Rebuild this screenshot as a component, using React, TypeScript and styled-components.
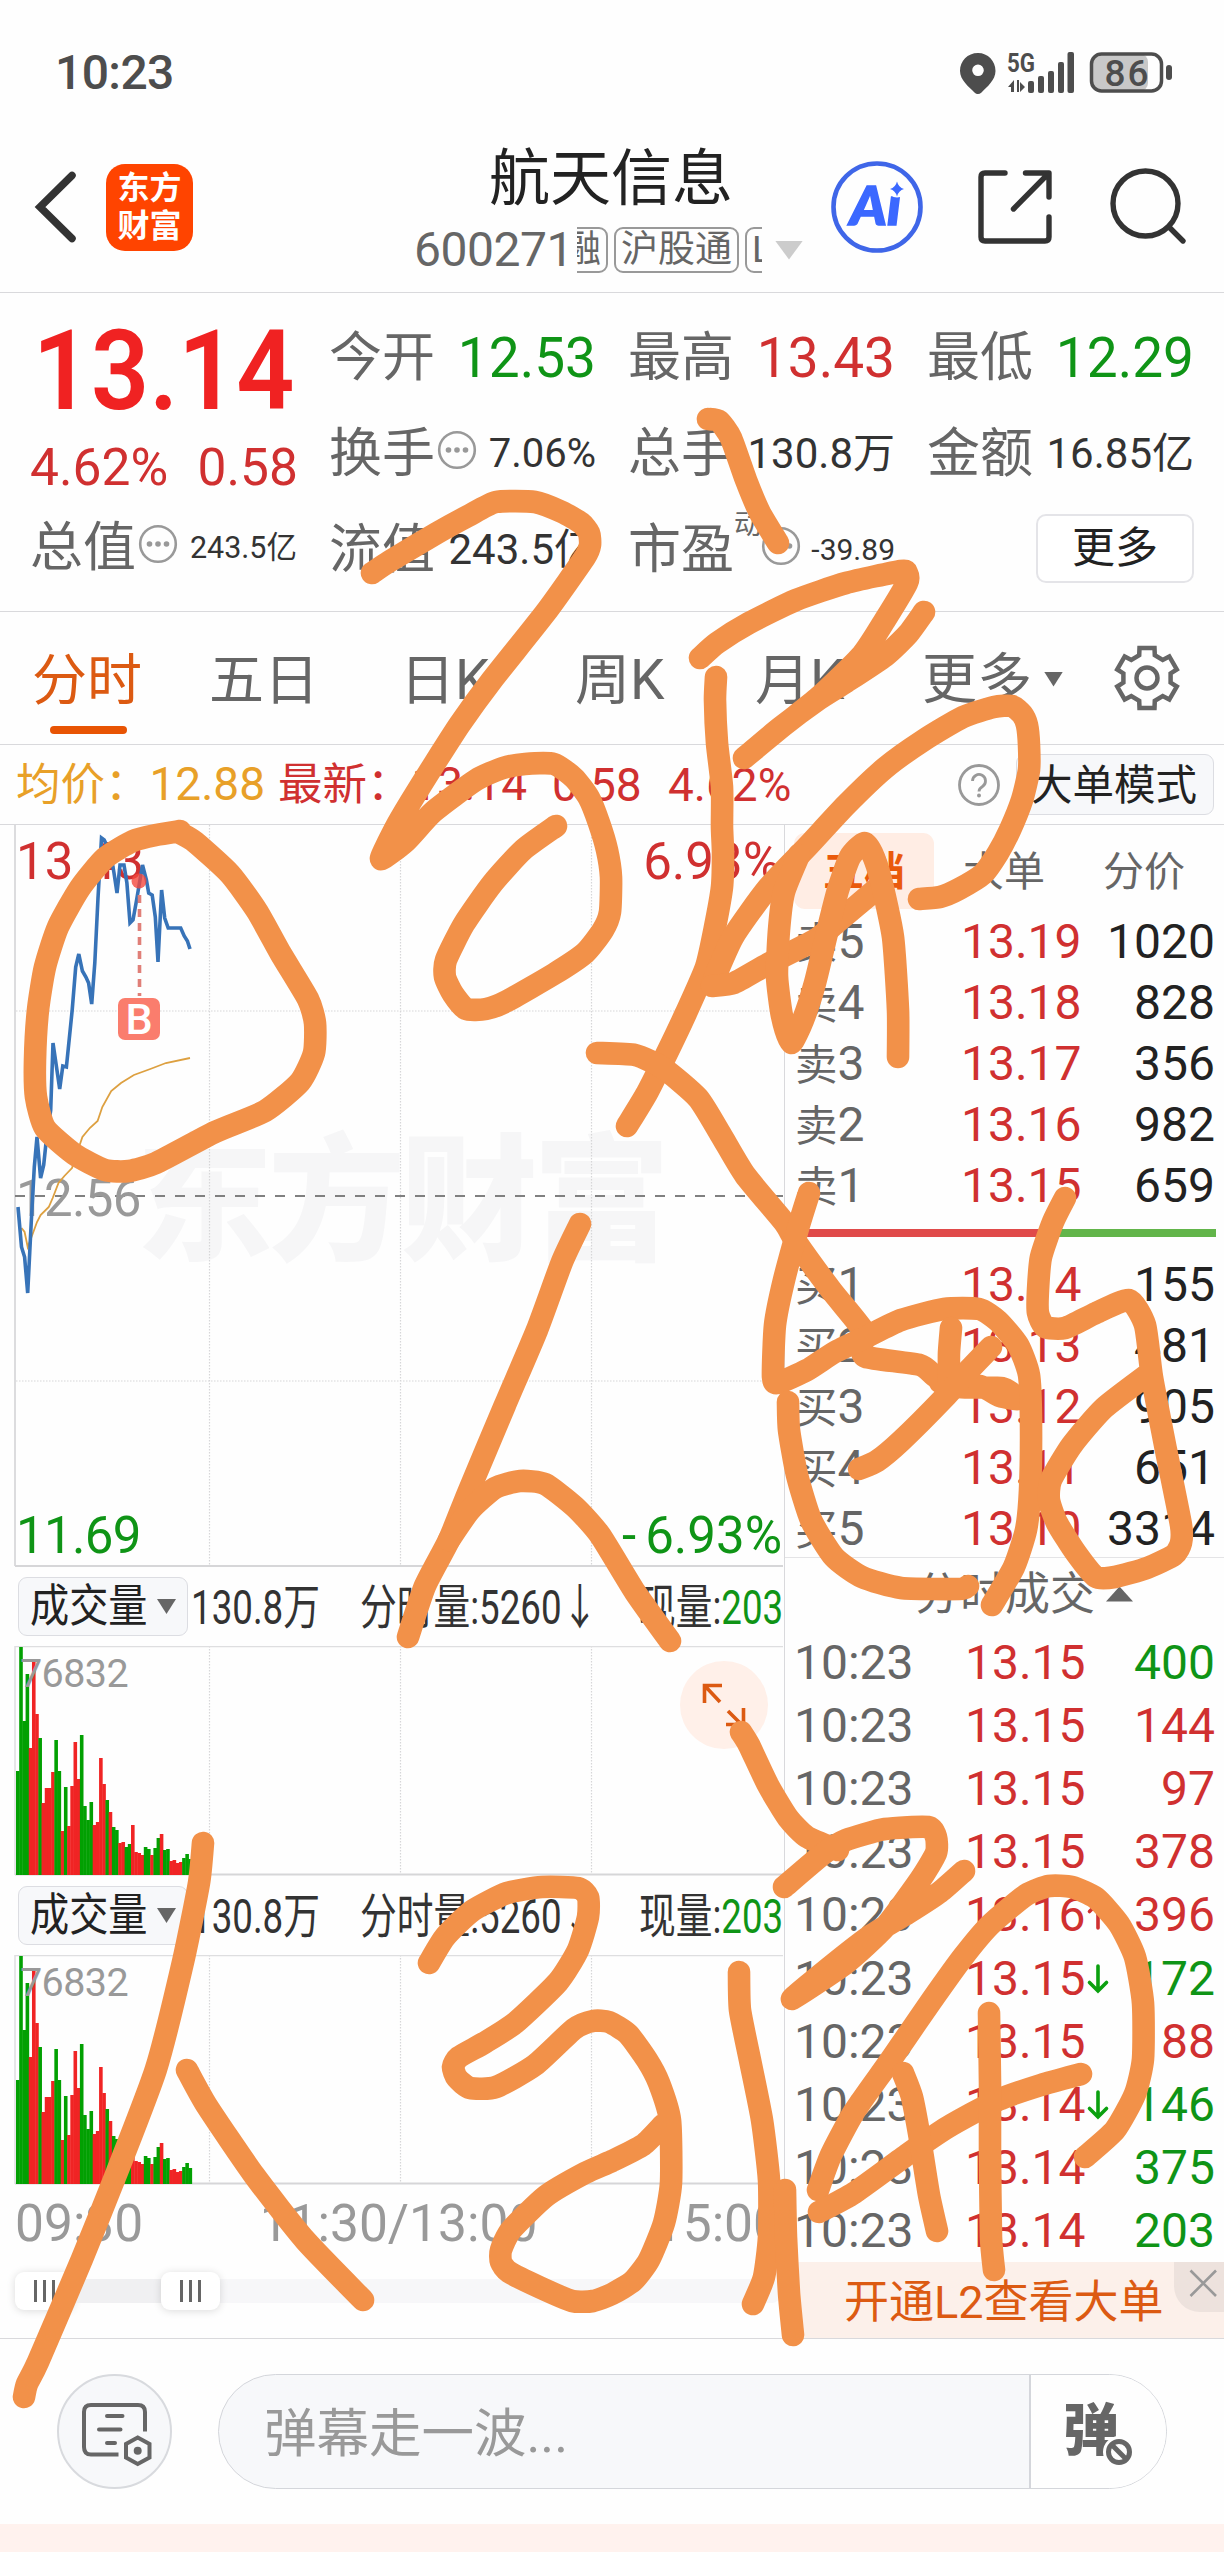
import React from 'react';
import styled, { createGlobalStyle } from 'styled-components';

const RED = '#d03030';
const GREEN = '#0f9416';
const GREY = '#666666';
const LINE = '#d9d9dc';
const ACCENT = '#dc5a12';
const FONT = 'Roboto, "Noto Sans CJK SC", sans-serif';

const GlobalStyle = createGlobalStyle`
  * { box-sizing: border-box; }
  body { margin: 0; background: #fefefe; font-family: ${FONT}; }
`;

/* ---------- page frame ---------- */

const Page = styled.div`
  position: relative;
  width: 1224px;
  height: 2552px;
  overflow: hidden;
  display: flex;
  flex-direction: column;
  background: #fefefe;
  color: #333;
  font-family: ${FONT};
  line-height: 1;
  white-space: nowrap;
`;

/* ---------- status bar ---------- */

const StatusBar = styled.div`
  height: 130px;
  padding: 51px 51px 0 55px;
  display: flex;
  justify-content: space-between;
  align-items: flex-start;
`;

const Clock = styled.div`
  font-size: 48px;
  line-height: 43px;
  font-weight: 500;
  letter-spacing: -0.6px;
  color: #4d4d4d;
`;

const StatusGlyphs = styled.svg`
  width: 214px;
  height: 44px;
  overflow: visible;
`;

/* ---------- header ---------- */

const Header = styled.header`
  height: 163px;
  border-bottom: 1px solid ${LINE};
  display: flex;
  padding-left: 30px;
`;

const BackIcon = styled.svg`
  margin-top: 40px;
  width: 50px;
  height: 74px;
`;

const AppLogo = styled.div`
  margin: 34px 0 0 26px;
  width: 87px;
  height: 87px;
  border-radius: 19px;
  background: #ff4400;
  color: #fff;
  font-size: 32px;
  font-weight: 700;
  line-height: 38px;
  padding-top: 5px;
  text-align: center;
`;

const TitleBlock = styled.div`
  margin-left: 221px;
  width: 400px;
  display: flex;
  flex-direction: column;
`;

const StockName = styled.h1`
  margin: 18px 0 0 75px;
  font-size: 61px;
  line-height: 62px;
  font-weight: 400;
  color: #222;
`;

const CodeRow = styled.div`
  margin-top: 16px;
  height: 48px;
  display: flex;
  align-items: center;
`;

const Code = styled.span`
  font-size: 48px;
  letter-spacing: -0.5px;
  width: 163px;
  color: ${GREY};
`;

const Tags = styled.div`
  width: 185px;
  height: 46px;
  margin-right: 13px;
  overflow: hidden;
  display: flex;
  gap: 6px;
`;

const Tag = styled.span<{ $shift?: number }>`
  flex: none;
  height: 46px;
  padding: 0 5px;
  margin-left: ${(p) => p.$shift ?? 0}px;
  border: 2px solid #999;
  border-radius: 9px;
  font-size: 37px;
  line-height: 41px;
  color: ${GREY};
`;

const Caret = styled.i<{ $w: number; $h: number; $color: string; $up?: boolean }>`
  flex: none;
  width: ${(p) => p.$w}px;
  height: ${(p) => p.$h}px;
  background: ${(p) => p.$color};
  clip-path: ${(p) => (p.$up ? 'polygon(50% 0, 100% 100%, 0 100%)' : 'polygon(0 0, 100% 0, 50% 100%)')};
`;

const HeaderIcons = styled.svg`
  margin: 28px 0 0 10px;
  width: 370px;
  height: 100px;
`;

/* ---------- quote summary ---------- */

const Quote = styled.section`
  height: 319px;
  border-bottom: 1px solid ${LINE};
  padding: 17px 0 0 30px;
  display: grid;
  grid-template-columns: repeat(4, 268px);
  column-gap: 31px;
`;

const QuoteColumn = styled.div`
  display: flex;
  flex-direction: column;
`;

const Price = styled.div`
  height: 121px;
  line-height: 121px;
  font-size: 112px;
  font-weight: 600;
  padding-left: 3px;
  transform: scaleX(0.91);
  transform-origin: left center;
  color: #f02222;
`;

const Change = styled.div`
  height: 74px;
  display: flex;
  align-items: center;
  justify-content: space-between;
  font-size: 51.5px;
  color: ${RED};
`;

const Metric = styled.div<{ $h?: number }>`
  height: ${(p) => p.$h ?? 96}px;
  display: flex;
  align-items: center;
`;

const MetricLabel = styled.span`
  font-size: 53px;
  color: ${GREY};
`;

const MetricValue = styled.span<{ $size: number; $color?: string }>`
  margin-left: auto;
  padding-right: 1px;
  font-size: ${(p) => p.$size}px;
  color: ${(p) => p.$color ?? '#333'};
`;

const Superscript = styled.sup`
  align-self: flex-start;
  margin-top: 9px;
  font-size: 28px;
  line-height: 28px;
  color: ${GREY};
`;

const InfoDots = styled.svg<{ $gap?: number }>`
  width: 40px;
  height: 40px;
  margin: -8px 0 0 ${(p) => p.$gap ?? 2}px;
`;

const MoreButton = styled.button`
  margin: -4px 1px 0 auto;
  width: 158px;
  height: 69px;
  border: 2px solid #e4e4e8;
  border-radius: 10px;
  background: #fff;
  font: 400 43px/1 ${FONT};
  color: #222;
`;

/* ---------- period tabs ---------- */

const PeriodTabs = styled.nav`
  height: 133px;
  border-bottom: 1px solid ${LINE};
  padding-left: 32px;
  display: flex;
  align-items: center;
`;

const PeriodTab = styled.a<{ $w: number; $active?: boolean }>`
  width: ${(p) => p.$w}px;
  height: 132px;
  display: flex;
  flex-direction: column;
  font-size: 55px;
  line-height: 55px;
  padding-top: 41px;
  color: ${(p) => (p.$active ? ACCENT : GREY)};
  &::after {
    content: '';
    display: ${(p) => (p.$active ? 'block' : 'none')};
    width: 77px;
    height: 8px;
    border-radius: 4px;
    margin: 18px 0 0 18px;
    background: #e85404;
  }
`;

const MoreTab = styled.a`
  display: flex;
  align-items: center;
  gap: 12px;
  width: 190px;
  padding-top: 2px;
  font-size: 55px;
  color: ${GREY};
`;

/* ---------- average / latest strip ---------- */

const PriceStrip = styled.div`
  height: 80px;
  border-bottom: 1px solid ${LINE};
  padding-left: 16px;
  display: flex;
  align-items: center;
  font-size: 46px;
`;

const StripItem = styled.span<{ $w: number; $color: string }>`
  width: ${(p) => p.$w}px;
  color: ${(p) => p.$color};
`;

const StripLabel = styled.span`
  font-size: 44.5px;
`;

const HelpIcon = styled.svg`
  width: 44px;
  height: 44px;
  margin-left: auto;
`;

const ModeButton = styled.button`
  margin: 0 10px 0 15px;
  width: 198px;
  height: 61px;
  border: 1px solid #dcdde2;
  border-radius: 9px;
  background: #f7f8fa;
  padding: 2px 2px 0 0;
  font: 400 41.5px/1 ${FONT};
  color: #222;
`;

/* ---------- main area ---------- */

const Main = styled.main`
  height: 1514px;
  border-bottom: 1px solid ${LINE};
  display: flex;
`;

const ChartColumn = styled.div`
  width: 785px;
  border-right: 1px solid ${LINE};
  display: flex;
  flex-direction: column;
`;

const ChartSvg = styled.svg`
  display: block;
  flex: none;
`;

const VolumeHead = styled.div`
  height: 79px;
  padding-left: 18px;
  display: flex;
  align-items: center;
`;

const IndicatorSelect = styled.div`
  width: 170px;
  height: 59px;
  border: 1px solid #dcdde2;
  border-radius: 9px;
  background: #f7f8fa;
  padding: 0 11px 0 11px;
  display: flex;
  align-items: center;
  justify-content: space-between;
`;

const IndicatorName = styled.span`
  width: 118px;
  font-size: 45px;
  transform: scaleX(0.87);
  transform-origin: left center;
  color: #222;
`;

const Narrow = styled.span<{ $w: number; $gap: number }>`
  width: ${(p) => p.$w}px;
  margin-left: ${(p) => p.$gap}px;
  padding-top: 2px;
  font-size: 48px;
  transform: scaleX(0.765);
  transform-origin: left center;
`;

const Down = styled.span`
  color: ${GREEN};
`;

const VolumeBox = styled.div`
  position: relative;
  height: 230px;
`;

const ExpandButton = styled.svg`
  position: absolute;
  left: 680px;
  top: 15px;
  width: 88px;
  height: 88px;
`;

const TimeAxis = styled.div`
  height: 76px;
  padding: 2px 2px 0 15px;
  display: flex;
  align-items: center;
  justify-content: space-between;
  font-size: 51.5px;
  color: #999;
`;

const RangeTrack = styled.div`
  margin: 18px 4px 0 15px;
  height: 24px;
  border-radius: 8px;
  background: #f7f7f9;
  display: flex;
  align-items: center;
`;

const RangeFill = styled.div`
  width: 87px;
  height: 24px;
  background: #f0f0f2;
`;

const RangeHandle = styled.div`
  width: 59px;
  height: 38px;
  border-radius: 9px;
  background: #fff;
  box-shadow: 0 1px 8px rgba(0, 0, 0, 0.14);
  display: flex;
  align-items: center;
  justify-content: center;
  gap: 6px;
`;

const Grip = styled.i`
  width: 3px;
  height: 22px;
  background: ${GREY};
`;

/* ---------- order book ---------- */

const BookColumn = styled.aside`
  width: 439px;
  display: flex;
  flex-direction: column;
`;

const BookTabs = styled.div`
  height: 85px;
  padding: 8px 0 0 9px;
  display: flex;
`;

const BookTab = styled.a<{ $active?: boolean }>`
  width: 140px;
  height: 76px;
  border-radius: 11px;
  background: ${(p) => (p.$active ? '#ffede4' : 'transparent')};
  color: ${(p) => (p.$active ? '#ea5a0c' : GREY)};
  font-size: 41px;
  font-weight: ${(p) => (p.$active ? 700 : 400)};
  line-height: 78px;
  text-align: center;
`;

const LevelRow = styled.div`
  height: 61px;
  padding: 2px 9px 0 10px;
  display: flex;
  align-items: center;
  font-size: 48px;
`;

const Level = styled.span`
  width: 166px;
  color: ${GREY};
`;

const Side = styled.span`
  font-size: 42.5px;
`;

const LevelPrice = styled.span`
  width: 130px;
  color: ${RED};
`;

const LevelQty = styled.span`
  margin-left: auto;
  color: #222;
`;

const Balance = styled.div`
  margin: 14px 8px 16px 9px;
  height: 8px;
  display: flex;
`;

const BalanceSide = styled.i<{ $grow: number; $color: string }>`
  flex: ${(p) => p.$grow};
  background: ${(p) => p.$color};
`;

const TradesHead = styled.div`
  height: 73px;
  margin-top: -1px;
  border-top: 1px solid #e4e4e6;
  padding-left: 130px;
  display: flex;
  align-items: center;
  gap: 11px;
  font-size: 45px;
  color: ${GREY};
`;

const TradeRow = styled.div`
  height: 63.2px;
  padding: 2px 9px 0 9px;
  display: flex;
  align-items: center;
  font-size: 48px;
`;

const TradeTime = styled.span`
  width: 171px;
  color: ${GREY};
`;

const TradePrice = styled.span`
  width: 121px;
  color: ${RED};
`;

const TradeQty = styled.span<{ $color: string }>`
  margin-left: auto;
  color: ${(p) => p.$color};
`;

const Tick = styled.svg`
  width: 24px;
  height: 32px;
`;

const Promo = styled.div`
  height: 76px;
  background: #fcf0ea;
  padding-left: 59px;
  display: flex;
  align-items: center;
  justify-content: space-between;
  font-size: 45px;
  color: ${ACCENT};
`;

const PromoText = styled.span`
  padding-top: 5px;
`;

const PromoClose = styled.svg`
  align-self: flex-start;
  width: 50px;
  height: 50px;
  border-bottom-left-radius: 26px;
  background: #ede2dd;
`;

/* ---------- comment bar ---------- */

const CommentBar = styled.footer`
  height: 185px;
  padding: 35px 0 0 57px;
  display: flex;
  align-items: flex-start;
`;

const RoundButton = styled.svg`
  width: 115px;
  height: 115px;
`;

const CommentBox = styled.div`
  margin-left: 46px;
  width: 949px;
  height: 115px;
  border: 1px solid #d4d6db;
  border-radius: 58px;
  overflow: hidden;
  display: flex;
  background: #f7f8fa;
`;

const Placeholder = styled.span`
  flex: 1;
  padding-left: 45px;
  font-size: 52.5px;
  line-height: 119px;
  color: #999;
`;

const BarrageToggle = styled.div`
  position: relative;
  width: 137px;
  border-left: 2px solid #d4d6db;
  background: #fefefe;
  padding: 27px 0 0 32px;
  font-size: 56px;
  line-height: 58px;
  font-weight: 900;
  color: ${GREY};
`;

const BlockBadge = styled.svg`
  position: absolute;
  left: 72px;
  top: 61px;
  width: 32px;
  height: 32px;
`;

const BottomStrip = styled.div`
  flex: 1;
  background: #fff2ee;
`;

const InkLayer = styled.svg`
  position: absolute;
  left: 0;
  top: 0;
  pointer-events: none;
`;

/* ---------- data ---------- */

const sells: [string, string, string][] = [
  ['5', '13.19', '1020'],
  ['4', '13.18', '828'],
  ['3', '13.17', '356'],
  ['2', '13.16', '982'],
  ['1', '13.15', '659'],
];

const buys: [string, string, string][] = [
  ['1', '13.14', '155'],
  ['2', '13.13', '481'],
  ['3', '13.12', '905'],
  ['4', '13.11', '651'],
  ['5', '13.10', '3314'],
];

type Trade = { price: string; qty: string; up?: boolean; tick?: 'up' | 'down' };

const trades: Trade[] = [
  { price: '13.15', qty: '400' },
  { price: '13.15', qty: '144', up: true },
  { price: '13.15', qty: '97', up: true },
  { price: '13.15', qty: '378', up: true },
  { price: '13.16', qty: '396', up: true, tick: 'up' },
  { price: '13.15', qty: '172', tick: 'down' },
  { price: '13.15', qty: '88', up: true },
  { price: '13.14', qty: '146', tick: 'down' },
  { price: '13.14', qty: '375' },
  { price: '13.14', qty: '203' },
];

const priceLine =
  '18,1207 21.5,1247 24.6,1257 27.7,1293 31.2,1223 34.3,1167 37,1137 40.6,1178 43.7,1165 46,1143 50.7,1110 53,1043 59.7,1089 62.8,1066 66.4,1067 72.2,1010 75.7,967 78.8,954 82.4,971 85.9,977 88.6,983 91.7,1004 94.8,963 98,898 101.5,838 104.2,840 107,846 110.5,853 114,873 117,893 120,865 124,865 126.9,883 130,923 133,920 136.6,900 142.5,865 146.4,880 148.7,893 152.2,895 155.3,917 158,962 161.6,890 164.7,918 168.2,928 180.7,928 184.2,936 187.4,941 190,949';

const averageLine =
  '21.5,1228 24.6,1232 27.7,1247 33,1233 37,1222 40.6,1215 48.8,1207 52.7,1198 58.5,1183 64.4,1176 72,1168 79,1147 82.4,1137 89.8,1128 97.6,1121 102.3,1107 111.2,1091 121,1083 133.9,1075 150.3,1069 165.9,1063 190,1058';

// Bar height and direction per minute since the open.
const volumes =
  '104g 228g 154g 201g 127r 214r 161r 137g 72r 87r 87r 103r 135g 104g 44r 88g 49r 89r 133r 96r 140g 69g 55g 73g 50r 53r 117r 91r 75g 63r 48g 45g 32r 33r 28g 31g 50r 23r 22r 20r 28g 26g 20r 27g 37g 41r 25g 26g 14r 15r 12r 13r 17g 21g 16g'
    .split(' ')
    .map((v) => ({ h: parseInt(v, 10), up: v.endsWith('r') }));

// Handwritten pen strokes, one list of points each.
const strokes = [
  '372,573 390,561 437,533 468,516 496,502 535,502 562,512 581,523 589,533 590,545 585,557 546,612 492,680 460,724 433,766 410,803 396,827 381,859 406,841 433,812 476,780 503,768 525,764 554,764 574,778 589,798 599,823 607,850 611,877 610,912 603,930 585,953 554,974 507,1001 486,1009 466,1009 453,994 445,977 446,960 464,924 492,884 523,850 556,826',
  '708,419 719,421 731,438 746,480 760,513 778,543',
  '700,658 717,643 749,623 796,600 846,583 901,571 907,573 907,583 885,620 862,655 819,697 784,725 744,758 780,728 819,699 846,682 885,656 908,634 924,612',
  '716,677 715,700 717,743 722,787 722,827 723,853 722,887 715,927 706,967 686,1013 667,1053 647,1093 627,1126',
  '712,984 733,937 768,888 807,847 846,805 885,768 924,740 963,717 994,707 1012,706 1022,714 1027,725 1029,745 1029,770 1022,800 1010,830 998,853 983,874 959,889 940,897 919,899',
  '712,986 734,983 768,964 815,940 835,924 854,908 881,885',
  '799,855 784,892 779,930 777,976 782,1016 791,1043 803,1020 815,983 827,933 838,890 850,857 864,843 872,853 881,880 893,937 898,1010 898,1057',
  '597,1053 635,1055 663,1068 698,1098 721,1135 745,1175 784,1222 796,1242 831,1290 863,1330 862,1345 866,1357 920,1365 936,1377 960,1387 1002,1388 1018,1399 1000,1396 980,1386 940,1382',
  '809,1193 799,1225 784,1280 775,1325 773,1377 778,1383 807,1370 835,1352 866,1337 901,1320 944,1309 979,1309 998,1321 1018,1345 1029,1375 1031,1423 1030,1490 1026,1530 1014,1567 992,1605',
  '788,1402 789,1430 797,1475 811,1520 834,1557 862,1577 901,1588 959,1589 968,1586',
  '951,1328 949,1353 949,1382',
  '991,1347 968,1371 944,1398 901,1441 877,1461 859,1469',
  '1065,1198 1053,1222 1041,1257 1038,1290 1038,1313 1045,1327 1065,1328 1096,1313 1129,1300 1145,1325 1152,1377 1166,1450 1181,1525 1181,1543 1174,1555 1147,1568 1115,1577 1096,1577 1076,1553 1057,1523 1049,1500 1051,1480 1072,1445 1104,1408 1151,1372',
  '580,1224 562,1262 537,1330 505,1405 468,1493 449,1540 425,1586 408,1637',
  '449,1540 470,1510 495,1488 520,1481 545,1484 575,1507 600,1535 635,1592 670,1641',
  '203,1843 199,1883 183,1962 156,2069 117,2172 82,2259 38,2362 27,2384 24,2397',
  '187,2070 207,2106 254,2175 305,2240 363,2300',
  '429,1963 445,1937 472,1911 507,1893 542,1887 578,1888 588,1897 588,1917 578,1950 558,1982 515,2023 484,2043 459,2057 453,2067 457,2078 470,2088 496,2087 535,2065 574,2029 593,2021 609,2022 628,2034 647,2060 659,2083 670,2120 671,2183 664,2223 649,2260 633,2281 612,2294 593,2301 572,2301 539,2287 509,2272 501,2262 501,2250 511,2230 546,2196 585,2173 612,2161 643,2145 663,2125',
  '741,1732 749,1745 768,1785 788,1818 807,1837 838,1850',
  '784,1887 823,1854 846,1840 885,1829 928,1827 936,1837 936,1853 920,1880 885,1927 846,1963 792,1999 830,1967 870,1936 908,1913 940,1892 964,1871',
  '739,1972 740,2010 750,2060 762,2120 769,2180 769,2237 764,2277 753,2304',
  '785,2190 786,2237 789,2293 793,2335',
  '818,2190 831,2155 854,2112 885,2068 901,2045 932,2000 963,1957 990,1925 1026,1895 1049,1886 1072,1887 1096,1898 1119,1924 1135,1957 1143,2003 1143,2059 1135,2094 1115,2130 1085,2157',
  '819,2212 854,2193 908,2154 948,2127 998,2100 1041,2085 1081,2074',
  '903,2073 912,2097 920,2139 929,2195 937,2231',
  '989,2013 990,2083 990,2150 991,2237 994,2270',
  '180,831 156,835 133,841 105,858 80,888 58,927 45,967 38,1010 35,1060 36,1097 45,1128 74,1154 105,1170 129,1171 156,1163 215,1132 265,1111 300,1082 314,1053 315,1023 308,999 281,954 257,911 230,874 195,842 180,833',
];

const toPath = (points: string) => {
  const pts = points.split(' ').map((p) => p.split(',').map(Number));
  let d = `M${pts[0][0]} ${pts[0][1]}`;
  for (let i = 0; i < pts.length - 1; i++) {
    const a = pts[Math.max(i - 1, 0)];
    const b = pts[i];
    const c = pts[i + 1];
    const e = pts[Math.min(i + 2, pts.length - 1)];
    const k = 0.1;
    d += `C${b[0] + (c[0] - a[0]) * k} ${b[1] + (c[1] - a[1]) * k} ${c[0] - (e[0] - b[0]) * k} ${c[1] - (e[1] - b[1]) * k} ${c[0]} ${c[1]}`;
  }
  return d;
};

/* ---------- pieces ---------- */

const StatusIcons = () => (
  <StatusGlyphs viewBox="960 50 214 44" fill="#4d4d4d">
    <path fillRule="evenodd" d="M979 52c-10.500 0-18 8-18 18 0 9 9 16 14.500 21.500 2.500 2 4.500 2 7 0C988 86 996.500 79 996.500 70c0-10-7.500-18-17.500-18zm0 11.500a5.800 5.800 0 1 1 0 11.600a5.800 5.800 0 0 1 0-11.600z" />
    <text x="1008" y="71" fontSize="25.500" fontWeight="700" textLength="28" lengthAdjust="spacingAndGlyphs">5G</text>
    <path d="M1009 86l6-7v12h-3v-5zM1017 79v12M1018 79v12h2V79zM1021 81l5 5l-5 5z" />
    <rect x="1029" y="80" width="6" height="12" rx="2" />
    <rect x="1039" y="75" width="6" height="17" rx="2" />
    <rect x="1049" y="70" width="6" height="22" rx="2" />
    <rect x="1059" y="61" width="6" height="31" rx="2" />
    <rect x="1068.500" y="51" width="6.500" height="41" rx="2" />
    <rect x="1093" y="53" width="56" height="37" rx="8" fill="#c8c8c8" />
    <rect x="1092.500" y="53" width="70" height="37" rx="10" fill="none" stroke="#4d4d4d" strokeWidth="3.500" />
    <rect x="1167" y="64" width="6" height="15" rx="3" />
    <text x="1105.500" y="85" fontSize="37" fontWeight="500" letterSpacing="2">86</text>
  </StatusGlyphs>
);

const Dots = ({ gap }: { gap?: number }) => (
  <InfoDots $gap={gap} viewBox="0 0 40 40">
    <circle cx="20" cy="20" r="17.800" fill="none" stroke="#999" strokeWidth="2.600" />
    <g fill="#999">
      <circle cx="11.500" cy="20" r="2.800" />
      <circle cx="20" cy="20" r="2.800" />
      <circle cx="28.500" cy="20" r="2.800" />
    </g>
  </InfoDots>
);

const PriceChart = () => (
  <ChartSvg width="784" height="742" viewBox="0 825 784 742">
    <text x="136" y="1250" fontSize="137" fontWeight="900" fill="#f6f6f7" textLength="534">东方财富</text>
    <g stroke="#d6d6d8" strokeWidth="1.200" strokeDasharray="1.500 1.500">
      <path d="M209.500 825V1565M400.500 825V1565M591.500 825V1565M16 1011H784M16 1381H784" />
    </g>
    <path d="M15 825V1566" stroke="#dcdcde" strokeWidth="2" />
    <path d="M15 1566H783" stroke="#d6d6d8" strokeWidth="2" />
    <path d="M15 1196H783" stroke="#808080" strokeWidth="2" strokeDasharray="10 10" />
    <g fontSize="51">
      <text x="16" y="879" fill={RED}>13.43</text>
      <text x="780" y="879" fill={RED} textAnchor="end">6.93%</text>
      <text x="16" y="1216" fill="#999" letterSpacing="-0.7">12.56</text>
      <text x="16" y="1553" fill={GREEN} letterSpacing="-0.7">11.69</text>
      <text x="782" y="1553" fill={GREEN} textAnchor="end">
        -<tspan dx="9">6.93%</tspan>
      </text>
    </g>
    <polyline points={averageLine} fill="none" stroke="#dda040" strokeWidth="1.800" />
    <polyline points={priceLine} fill="none" stroke="#3773b8" strokeWidth="3.600" />
    <circle cx="139" cy="881" r="7.500" fill="#f4483e" fillOpacity="0.8" />
    <path d="M139.500 895V996" stroke="#e07f78" strokeWidth="3.600" strokeDasharray="8 6" />
    <rect x="118" y="998" width="42" height="42" rx="7" fill="#fa7d6d" />
    <text x="139" y="1034" fontSize="43" fontWeight="500" fill="#fff" textAnchor="middle">B</text>
  </ChartSvg>
);

const VolumePanel = ({ expandable }: { expandable?: boolean }) => (
  <>
    <VolumeHead>
      <IndicatorSelect>
        <IndicatorName>成交量</IndicatorName>
        <Caret $w={19} $h={15} $color={GREY} />
      </IndicatorSelect>
      <Narrow $w={125} $gap={3}>130.8万</Narrow>
      <Narrow $w={232} $gap={44}>分时量:5260↓</Narrow>
      <Narrow $w={142} $gap={47}>
        现量:<Down>203</Down>
      </Narrow>
    </VolumeHead>
    <VolumeBox>
      <ChartSvg width="784" height="230" viewBox="0 0 784 230">
        <path d="M209.500 0V228M400.500 0V228M591.500 0V228" stroke="#d6d6d8" strokeWidth="1.200" strokeDasharray="1.500 1.500" />
        <path d="M15 0.500H783M15 0V229" stroke="#dedee0" strokeWidth="1.500" fill="none" />
        <path d="M15 228.500H783" stroke="#d6d6d8" strokeWidth="2" />
        {volumes.map((v, i) => (
          <rect key={i} x={16 + i * 3.195} y={229 - v.h} width={3.6} height={v.h} fill={v.up ? '#f02424' : '#02a002'} />
        ))}
        <text x="20" y="41" fontSize="39.500" fill="#999" letterSpacing="-0.6">76832</text>
      </ChartSvg>
      {expandable && (
        <ExpandButton viewBox="0 0 88 88">
          <circle cx="44" cy="44" r="44" fill="#fff0e9" />
          <path d="M24.500 42V24.500H42M25 25L40 41M48 50L63 65M46 63.500H63.500V47" fill="none" stroke={ACCENT} strokeWidth="3.600" />
        </ExpandButton>
      )}
    </VolumeBox>
  </>
);

const Levels = ({ side, rows }: { side: string; rows: [string, string, string][] }) => (
  <>
    {rows.map(([n, price, qty]) => (
      <LevelRow key={n}>
        <Level>
          <Side>{side}</Side>
          {n}
        </Level>
        <LevelPrice>{price}</LevelPrice>
        <LevelQty>{qty}</LevelQty>
      </LevelRow>
    ))}
  </>
);

const gearPath = () => {
  const pts: string[] = [];
  for (let i = 0; i < 6; i++) {
    const base = -90 + i * 60;
    [[-19, 24], [-14, 31], [14, 31], [19, 24]].forEach(([a, r]) => {
      const t = ((base + a) * Math.PI) / 180;
      pts.push(`${(35 + r * Math.cos(t)).toFixed(1)},${(35 + r * Math.sin(t)).toFixed(1)}`);
    });
  }
  return pts.join(' ');
};

export default function App() {
  return (
    <Page>
      <GlobalStyle />
      <StatusBar>
        <Clock>10:23</Clock>
        <StatusIcons />
      </StatusBar>

      <Header>
        <BackIcon viewBox="0 0 50 74">
          <path d="M42 5.500L10 37L42 68.500" fill="none" stroke="#333" strokeWidth="7.500" strokeLinecap="round" strokeLinejoin="miter" />
        </BackIcon>
        <AppLogo>
          东方
          <br />
          财富
        </AppLogo>
        <TitleBlock>
          <StockName>航天信息</StockName>
          <CodeRow>
            <Code>600271</Code>
            <Tags>
              <Tag $shift={-20}>融</Tag>
              <Tag>沪股通</Tag>
              <Tag>L1</Tag>
            </Tags>
            <Caret $w={28} $h={19} $color="#cccccc" />
          </CodeRow>
        </TitleBlock>
        <HeaderIcons viewBox="824 158 370 100">
          <circle cx="877" cy="207" r="43.500" fill="none" stroke="#3f66e8" strokeWidth="4.600" />
          <text x="850" y="225" fontFamily="Lato, sans-serif" fontSize="53" fontWeight="900" fontStyle="italic" fill="#3b68ff" stroke="#3b68ff" strokeWidth="1.500" textLength="51" lengthAdjust="spacingAndGlyphs">Ai</text>
          <circle cx="897" cy="188" r="9.500" fill="#fefefe" />
          <path d="M897 181.500q1.500 6 7 7.500q-5.500 1.500-7 7.500q-1.500-6-7-7.500q5.500-1.500 7-7.500z" fill="#3b68ff" />
          <g fill="none" stroke="#333" strokeWidth="5.400" strokeLinecap="round" strokeLinejoin="round">
            <path d="M1005 173H985Q981 173 981 177V237Q981 241 985 241H1045Q1049 241 1049 237V217M1025.500 173H1049V197M1013.500 209L1048 174" />
            <circle cx="1145.500" cy="203.500" r="32.500" />
            <path d="M1169 227L1183 241" />
          </g>
        </HeaderIcons>
      </Header>

      <Quote>
        <QuoteColumn>
          <Price>13.14</Price>
          <Change>
            <span>4.62%</span>
            <span>0.58</span>
          </Change>
          <Metric $h={86}>
            <MetricLabel>总值</MetricLabel>
            <Dots />
            <MetricValue $size={30.5}>243.5亿</MetricValue>
          </Metric>
        </QuoteColumn>
        <QuoteColumn>
          <Metric>
            <MetricLabel>今开</MetricLabel>
            <MetricValue $size={55} $color={GREEN}>12.53</MetricValue>
          </Metric>
          <Metric>
            <MetricLabel>换手</MetricLabel>
            <Dots />
            <MetricValue $size={40}>7.06%</MetricValue>
          </Metric>
          <Metric>
            <MetricLabel>流值</MetricLabel>
            <MetricValue $size={42}>243.5亿</MetricValue>
          </Metric>
        </QuoteColumn>
        <QuoteColumn>
          <Metric>
            <MetricLabel>最高</MetricLabel>
            <MetricValue $size={55} $color={RED}>13.43</MetricValue>
          </Metric>
          <Metric>
            <MetricLabel>总手</MetricLabel>
            <MetricValue $size={42}>130.8万</MetricValue>
          </Metric>
          <Metric>
            <MetricLabel>市盈</MetricLabel>
            <Superscript>动</Superscript>
            <Dots gap={-1} />
            <MetricValue $size={30}>-39.89</MetricValue>
          </Metric>
        </QuoteColumn>
        <QuoteColumn>
          <Metric>
            <MetricLabel>最低</MetricLabel>
            <MetricValue $size={55} $color={GREEN}>12.29</MetricValue>
          </Metric>
          <Metric>
            <MetricLabel>金额</MetricLabel>
            <MetricValue $size={42}>16.85亿</MetricValue>
          </Metric>
          <Metric>
            <MoreButton>更多</MoreButton>
          </Metric>
        </QuoteColumn>
      </Quote>

      <PeriodTabs>
        <PeriodTab $w={177} $active>分时</PeriodTab>
        <PeriodTab $w={191}>五日</PeriodTab>
        <PeriodTab $w={175}>日K</PeriodTab>
        <PeriodTab $w={180}>周K</PeriodTab>
        <PeriodTab $w={167}>月K</PeriodTab>
        <MoreTab>
          更多
          <Caret $w={19} $h={15} $color={GREY} />
        </MoreTab>
        <svg width="70" height="70" viewBox="0 0 70 70" fill="none" stroke={GREY} strokeWidth="4.500">
          <polygon points={gearPath()} />
          <circle cx="35" cy="35" r="10.500" />
        </svg>
      </PeriodTabs>

      <PriceStrip>
        <StripItem $w={262} $color="#e8a028">
          <StripLabel>均价：</StripLabel>12.88
        </StripItem>
        <StripItem $w={274} $color={RED}>
          <StripLabel>最新：</StripLabel>13.14
        </StripItem>
        <StripItem $w={116} $color={RED}>0.58</StripItem>
        <StripItem $w={130} $color={RED}>4.62%</StripItem>
        <HelpIcon viewBox="0 0 44 44">
          <circle cx="22" cy="22" r="19.500" fill="none" stroke="#999" strokeWidth="2.800" />
          <path d="M15.500 18a6.500 6.500 0 1 1 10 5.500c-2.500 1.600-3.500 2.500-3.500 5" fill="none" stroke="#999" strokeWidth="2.800" />
          <circle cx="22" cy="32.500" r="2" fill="#999" />
        </HelpIcon>
        <ModeButton>大单模式</ModeButton>
      </PriceStrip>

      <Main>
        <ChartColumn>
          <PriceChart />
          <VolumePanel expandable />
          <VolumePanel />
          <TimeAxis>
            <span>09:30</span>
            <span>11:30/13:00</span>
            <span>15:00</span>
          </TimeAxis>
          <RangeTrack>
            <RangeHandle><Grip /><Grip /><Grip /></RangeHandle>
            <RangeFill />
            <RangeHandle><Grip /><Grip /><Grip /></RangeHandle>
          </RangeTrack>
        </ChartColumn>

        <BookColumn>
          <BookTabs>
            <BookTab $active>五档</BookTab>
            <BookTab>大单</BookTab>
            <BookTab>分价</BookTab>
          </BookTabs>
          <Levels side="卖" rows={sells} />
          <Balance>
            <BalanceSide $grow={263} $color="#e04a4a" />
            <BalanceSide $grow={158} $color="#62b54a" />
          </Balance>
          <Levels side="买" rows={buys} />
          <TradesHead>
            分时成交
            <Caret $w={27} $h={15} $color={GREY} $up />
          </TradesHead>
          {trades.map((t, i) => (
            <TradeRow key={i}>
              <TradeTime>10:23</TradeTime>
              <TradePrice>{t.price}</TradePrice>
              {t.tick && (
                <Tick viewBox="0 0 24 32" fill="none" stroke={t.tick === 'up' ? RED : '#0ba00f'} strokeWidth="3.600" strokeLinecap="round">
                  <path d={t.tick === 'up' ? 'M12 29V4M3.500 12.500L12 4L20.500 12.500' : 'M12 3V28M3.500 19.500L12 28L20.500 19.500'} />
                </Tick>
              )}
              <TradeQty $color={t.up ? RED : GREEN}>{t.qty}</TradeQty>
            </TradeRow>
          ))}
          <Promo>
            <PromoText>开通L2查看大单</PromoText>
            <PromoClose viewBox="0 0 50 50">
              <path d="M16.500 8.500L42 34M42 8.500L16.500 34" stroke="#999" strokeWidth="2.600" />
            </PromoClose>
          </Promo>
        </BookColumn>
      </Main>

      <CommentBar>
        <RoundButton viewBox="57 2374 115 115">
          <circle cx="114.500" cy="2431.500" r="56.500" fill="#f7f8fa" stroke="#d8dade" strokeWidth="2" />
          <g fill="none" stroke={GREY} strokeWidth="4" strokeLinecap="butt">
            <path d="M145 2431.500V2412Q145 2405 138 2405H91Q84 2405 84 2412V2447Q84 2454.500 91 2454.500H118.500" />
            <path d="M107 2416H122.500M99 2429.500H120.500M107 2443H115" strokeLinecap="round" />
            <path d="M137.700 2437.500L149.500 2444V2457.500L137.700 2464L126 2457.500V2444Z" />
          </g>
          <circle cx="137.700" cy="2450.700" r="4" fill={GREY} />
        </RoundButton>
        <CommentBox>
          <Placeholder>弹幕走一波...</Placeholder>
          <BarrageToggle>
            弹
            <BlockBadge viewBox="0 0 32 32">
              <circle cx="16" cy="16" r="16" fill="#fefefe" />
              <circle cx="16" cy="16" r="10.500" fill="none" stroke={GREY} strokeWidth="5" />
              <path d="M9 9L23 23" stroke={GREY} strokeWidth="5" />
            </BlockBadge>
          </BarrageToggle>
        </CommentBox>
      </CommentBar>
      <BottomStrip />

      <InkLayer width="1224" height="2552" viewBox="0 0 1224 2552" fill="none" stroke="#f29149" strokeWidth="22.600" strokeLinecap="round" strokeLinejoin="round">
        {strokes.map((s, i) => (
          <path key={i} d={toPath(s)} />
        ))}
      </InkLayer>
    </Page>
  );
}
